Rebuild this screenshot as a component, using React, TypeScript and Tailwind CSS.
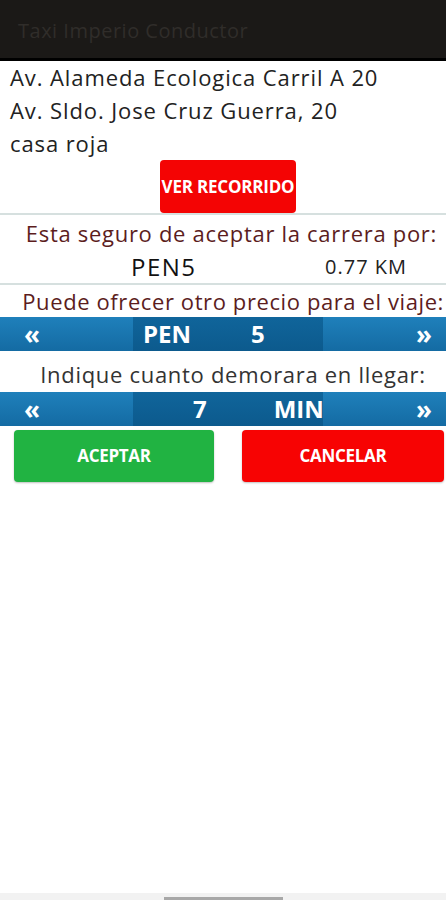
export default function App() {
  return (
    <div className="w-[446px] h-[900px] bg-white flex flex-col font-['Open_Sans',sans-serif] overflow-hidden">
      {/* HEADER */}
      <div className="h-[61px] shrink-0 bg-[#1b1917] flex items-center pl-[18px] border-b-[3px] border-black">
        <span className="text-[20px] tracking-[0.5px] text-[#302d2a] pt-1">Taxi Imperio Conductor</span>
      </div>

      {/* ADDRESS */}
      <div className="px-[10px] text-[22px] tracking-[0.9px] leading-[33px] text-[#222]">
        <p>Av. Alameda Ecologica Carril A 20</p>
        <p>Av. Sldo. Jose Cruz Guerra, 20</p>
        <p>casa roja</p>
      </div>

      <div className="flex justify-center pl-[10px]">
        <button className="w-[136px] h-[53px] bg-[#f40404] rounded-[4px] text-white text-[17px] font-bold tracking-[-0.2px] flex items-center justify-center whitespace-nowrap overflow-visible">
          VER RECORRIDO
        </button>
      </div>

      <div className="h-[2px] bg-[#d6e0df]" />

      <p className="text-right pr-[9px] text-[22px] tracking-[0.7px] leading-[36px] text-[#5c1d1d] whitespace-nowrap">
        Esta seguro de aceptar la carrera por:
      </p>
      <div className="flex items-center h-[32px]">
        <span className="ml-[131px] w-[194px] text-[24px] tracking-[1.5px] text-[#111]">PEN5</span>
        <span className="text-[20px] tracking-[1px] text-[#222]">0.77 KM</span>
      </div>

      <div className="h-[2px] bg-[#d6e0df]" />

      <p className="text-right pr-[2px] text-[22px] tracking-[0.6px] leading-[32px] text-[#5c1d1d] whitespace-nowrap">
        Puede ofrecer otro precio para el viaje:
      </p>

      {/* PRICE BAR */}
      <div className="flex h-[34px] text-white font-bold">
        <div className="w-[133px] bg-gradient-to-b from-[#1f80bb] to-[#146ba3] flex items-center pl-[24px] text-[26px]">
          «
        </div>
        <div className="w-[190px] bg-gradient-to-b from-[#10659b] to-[#0c5a8d] flex items-center text-[24px]">
          <span className="ml-[10px]">PEN</span>
          <span className="ml-[60px]">5</span>
        </div>
        <div className="flex-1 bg-gradient-to-b from-[#1f80bb] to-[#146ba3] flex items-center justify-end pr-[14px] text-[26px]">
          »
        </div>
      </div>

      <p className="text-center pl-[20px] pt-[6px] text-[22px] tracking-[0.7px] leading-[35px] text-[#333] whitespace-nowrap">
        Indique cuanto demorara en llegar:
      </p>

      {/* TIME BAR */}
      <div className="flex h-[34px] text-white font-bold">
        <div className="w-[133px] bg-gradient-to-b from-[#1f80bb] to-[#146ba3] flex items-center pl-[24px] text-[26px]">
          «
        </div>
        <div className="w-[190px] bg-gradient-to-b from-[#10659b] to-[#0c5a8d] flex items-center text-[24px]">
          <span className="ml-[60px]">7</span>
          <span className="ml-[67px]">MIN</span>
        </div>
        <div className="flex-1 bg-gradient-to-b from-[#1f80bb] to-[#146ba3] flex items-center justify-end pr-[14px] text-[26px]">
          »
        </div>
      </div>

      {/* ACTIONS */}
      <div className="flex justify-between pl-[14px] pr-[2px] pt-[4px]">
        <button className="w-[200px] h-[52px] rounded-[4px] bg-[#21b342] shadow-[0_1px_2px_rgba(0,0,0,0.25)] text-white font-bold text-[17px] tracking-[-0.3px]">
          ACEPTAR
        </button>
        <button className="w-[202px] h-[52px] rounded-[4px] bg-[#f70303] shadow-[0_1px_2px_rgba(0,0,0,0.25)] text-white font-bold text-[17px] tracking-[-0.3px]">
          CANCELAR
        </button>
      </div>

      <div className="flex-1" />

      {/* NAV HANDLE */}
      <div className="h-[7px] shrink-0 bg-[#f2f2f2] flex justify-center items-end">
        <div className="w-[119px] h-[3px] bg-[#a8a8a8]" />
      </div>
    </div>
  );
}
